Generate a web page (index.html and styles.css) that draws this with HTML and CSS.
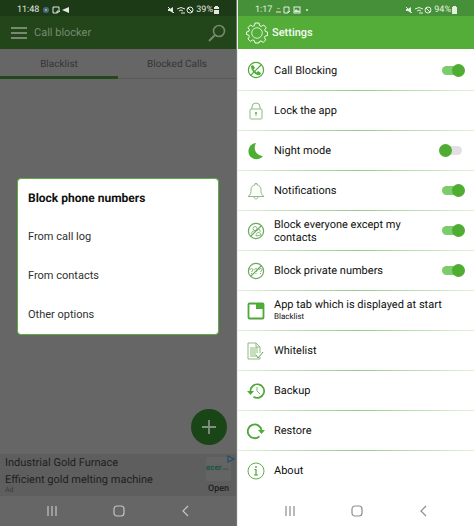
FILE: index.html
```
<!DOCTYPE html>
<html lang="en">
	<head>
		<meta charset="UTF-8" />
		<meta name="viewport" content="width=device-width, initial-scale=1.0" />
		<title>Call blocker</title>
		<link rel="stylesheet" href="styles.css">
	</head>
	<body>
		<section class="phone phone-dimmed">
			<div class="status">
				<span class="clock">11:48</span>
				<svg class="status-left" viewBox="0 0 28 8">
					<circle cx="4" cy="4" r="3" fill="#456b8c" /><circle cx="4" cy="4" r="1" fill="#c6b53e" />
					<path d="M15 7H11V1h6v3M15 7V5h3z" fill="none" stroke="currentColor" />
					<path d="M20 4l7-3v6z" fill="currentColor" />
				</svg>
				<svg class="status-right" viewBox="0 0 28 8">
					<path d="M1 3h2l3-2v6L3 5H1z" fill="currentColor" /><path d="M1 1l6 6" stroke="currentColor" />
					<path d="M10 3q4-3 8 0M12 5q2-2 4 0M14 7h4" fill="none" stroke="currentColor" />
					<circle cx="23" cy="4" r="3" fill="none" stroke="currentColor" /><path d="M21 2l4 4" stroke="currentColor" />
				</svg>
				<span>39%</span>
				<svg class="battery" viewBox="0 0 5 8"><path d="M1 0h3v1h1v2H0V1h1zM0 4h5v4H0z" fill="currentColor" /></svg>
			</div>
			<header class="bar">
				<button class="icon-button" aria-label="Menu">
					<svg class="menu-icon" viewBox="0 0 18 14"><path d="M1 2h16M1 7h16M1 12h16" stroke="currentColor" stroke-width="2" /></svg>
				</button>
				<h1>Call blocker</h1>
				<button class="icon-button search" aria-label="Search">
					<svg class="search-icon" viewBox="0 0 18 18"><circle cx="11" cy="7" r="5.5" fill="none" stroke="currentColor" stroke-width="1.6" /><path d="M7 11l-6 6" stroke="currentColor" stroke-width="2" /></svg>
				</button>
			</header>
			<nav class="tabs">
				<a class="tab tab-active" href="#blacklist">Blacklist</a>
				<a class="tab" href="#blocked">Blocked Calls</a>
			</nav>
			<main class="blacklist">
				<button class="add" aria-label="Add number">
					<svg viewBox="0 0 16 16"><path d="M8 1v14M1 8h14" stroke="currentColor" stroke-width="1.8" /></svg>
				</button>
			</main>
			<aside class="ad">
				<div class="ad-text">
					<p>Industrial Gold Furnace</p>
					<p>Efficient gold melting machine</p>
					<small>Ad</small>
				</div>
				<div class="ad-side">
					<span class="ad-logo">ecer<i>.com</i></span>
					<svg class="ad-mark" viewBox="0 0 8 8"><path d="M1 1l6 3-6 3z" fill="none" stroke="#264f68" stroke-width="1.3" /></svg>
					<a href="#open">Open</a>
				</div>
			</aside>
			<nav class="nav">
				<button aria-label="Recent apps"><svg viewBox="0 0 12 12"><path d="M2 1v10M6 1v10M10 1v10" /></svg></button>
				<button aria-label="Home"><svg viewBox="0 0 12 12"><rect x="1" y="1" width="10" height="10" rx="3" /></svg></button>
				<button aria-label="Back"><svg viewBox="0 0 12 12"><path d="M9 1L4 6l5 5" /></svg></button>
			</nav>
			<div class="dialog" role="dialog" aria-labelledby="dialogTitle">
				<h2 id="dialogTitle">Block phone numbers</h2>
				<button>From call log</button>
				<button>From contacts</button>
				<button>Other options</button>
			</div>
		</section>

		<section class="phone">
			<div class="status">
				<span class="clock">1:17</span>
				<svg class="status-left" viewBox="0 0 28 8">
					<path d="M2 2h3v1H2zM1 5h5v2H1z" fill="#a5b878" />
					<path d="M13 7H9V1h5v3M13 7V5h2z" fill="none" stroke="currentColor" />
					<rect x="19" y="1" width="6" height="6" fill="none" stroke="currentColor" /><path d="M19 6l2-3 2 2 1-1 1 2z" fill="currentColor" />
				</svg>
				<span class="dot"></span>
				<svg class="status-right" viewBox="0 0 28 8">
					<path d="M1 3h2l3-2v6L3 5H1z" fill="currentColor" /><path d="M1 1l6 6" stroke="currentColor" />
					<path d="M10 3q4-3 8 0M12 5q2-2 4 0M14 7h4" fill="none" stroke="currentColor" />
					<circle cx="23" cy="4" r="3" fill="none" stroke="currentColor" /><path d="M21 2l4 4" stroke="currentColor" />
				</svg>
				<span>94%</span>
				<svg class="battery" viewBox="0 0 5 8"><path d="M1 0h3v1h1v7H0V1h1z" fill="currentColor" /></svg>
			</div>
			<header class="bar">
				<svg class="gear-icon" viewBox="0 0 22 22" fill="none" stroke="currentColor" stroke-linejoin="round">
					<path d="M9 1h4l.6 2.7 1.7.7L17.700 3l2.500 2.700-1.500 2.200.7 1.600 2.100.5v3.500l-2.400.6-.7 1.600 1.400 2.200-2.600 2.500-2.200-1.500-1.700.7L13 21H9l-.6-2.400-1.700-.7-2.300 1.500L2 16.900l1.400-2.200-.7-1.600-2.200-.6V10l2.200-.5.7-1.600L2 5.700 4.500 3l2.200 1.400 1.700-.7z" />
					<circle cx="11" cy="11" r="5.300" stroke-width=".8" />
				</svg>
				<h1>Settings</h1>
			</header>
			<main class="settings">
				<div class="row">
					<svg class="row-icon" viewBox="0 0 18 18">
						<circle cx="9" cy="9" r="7.600" /><path d="M3.500 14.500l11-11" />
						<path class="solid" d="M4 5l2-1 2 3-1.500 1.500 3 3L11 10l3 2-1 2c-4 1-9-4-9-9z" />
					</svg>
					<label for="blocking">Call Blocking</label>
					<input class="switch" type="checkbox" id="blocking" checked />
				</div>
				<div class="row">
					<svg class="row-icon soft" viewBox="0 0 18 18">
						<rect x="3" y="7" width="12" height="10" rx="1" /><path d="M5 7V5a4 4 0 0 1 8 0v2M9 11v3" /><circle class="solid" cx="9" cy="11" r="1" />
					</svg>
					<a href="#lock">Lock the app</a>
				</div>
				<div class="row">
					<svg class="row-icon" viewBox="0 0 18 18"><path class="solid" d="M9 1C6 6 8 13 16 14 11 20 1 17 1.500 9 1.700 4 5 1.500 9 1z" /></svg>
					<label for="night">Night mode</label>
					<input class="switch" type="checkbox" id="night" />
				</div>
				<div class="row">
					<svg class="row-icon soft" viewBox="0 0 18 18"><path d="M1 14.500c3-2 3-4 3-7C4 5 6 3 8 3V1.500h2V3c2 0 4 2 4 4.500 0 3 0 5 3 7zM7 15c0 2.500 4 2.500 4 0" /></svg>
					<label for="notify">Notifications</label>
					<input class="switch" type="checkbox" id="notify" checked />
				</div>
				<div class="row">
					<svg class="row-icon muted" viewBox="0 0 18 18">
						<circle cx="9" cy="9" r="7.600" /><path d="M3.500 14.500l11-11" />
						<g stroke-width=".8"><circle cx="8" cy="6.500" r="2" /><path d="M4 12c1-3 3-3 5-3M9 14c0-5 5-4 5-1zM10 9c0-3 4-2 3 1" /></g>
					</svg>
					<label for="everyone">Block everyone except my contacts</label>
					<input class="switch" type="checkbox" id="everyone" checked />
				</div>
				<div class="row">
					<svg class="row-icon muted" viewBox="0 0 18 18">
						<circle cx="9" cy="9" r="7.600" /><path d="M3.500 14.500l11-11" />
						<path stroke-width=".9" d="M3 8c0-2 3-2 3 0L4.500 10M7.500 8c0-2 3-2 3 0L9 10M12 8c0-2 3-2 3 0l-1.500 2M4.500 11v1M9 11v1M13.500 11v1" />
					</svg>
					<label for="private">Block private numbers</label>
					<input class="switch" type="checkbox" id="private" checked />
				</div>
				<div class="row">
					<svg class="row-icon" viewBox="0 0 18 18"><rect x="1.500" y="1.500" width="15" height="15" rx="1" stroke-width="1.800" /><path class="solid" d="M9 2h7v5H9z" /></svg>
					<a href="#start">App tab which is displayed at start <small>Blacklist</small></a>
				</div>
				<div class="row">
					<svg class="row-icon soft" viewBox="0 0 18 18">
						<path d="M13 11V5L9 1H1v16h12v-2M9 1v4h4" /><path d="M3 6h8M3 8h8M3 10h8M3 12h6M3 14h6" /><path class="check" d="M9 13l2 3 5-6" />
					</svg>
					<a href="#whitelist">Whitelist</a>
				</div>
				<div class="row">
					<svg class="row-icon" viewBox="0 0 18 18"><path stroke-width="1.700" d="M3.500 9a6.800 6.800 0 1 1 3 5.700" /><path class="solid" d="M0 9h7l-3.500 4z" /><path stroke-width=".8" d="M10 5v4l3 3" /></svg>
					<a href="#backup">Backup</a>
				</div>
				<div class="row">
					<svg class="row-icon" viewBox="0 0 18 18"><path stroke-width="1.800" d="M12.500 14.300a6.900 6.900 0 1 1 2-6" /><path class="solid" d="M11 8h7l-3.500 4z" /></svg>
					<a href="#restore">Restore</a>
				</div>
				<div class="row">
					<svg class="row-icon" viewBox="0 0 18 18"><circle cx="9" cy="9" r="8" stroke-width=".9" /><path d="M7.500 7.500H9V13M7 13h4" /><circle class="solid" cx="9" cy="5" r=".9" /></svg>
					<a href="#about">About</a>
				</div>
			</main>
			<nav class="nav">
				<button aria-label="Recent apps"><svg viewBox="0 0 12 12"><path d="M2 1v10M6 1v10M10 1v10" /></svg></button>
				<button aria-label="Home"><svg viewBox="0 0 12 12"><rect x="1" y="1" width="10" height="10" rx="3" /></svg></button>
				<button aria-label="Back"><svg viewBox="0 0 12 12"><path d="M9 1L4 6l5 5" /></svg></button>
			</nav>
		</section>
	</body>
</html>
```
FILE: styles.css
```
* {
	box-sizing: border-box;
}
body {
	display: grid;
	grid-template-columns: 1fr 1fr;
	min-height: 100vh;
	margin: 0;
	font-family: Roboto, sans-serif;
	font-size: 11px;
	color: #111;
	text-rendering: geometricPrecision;
}
h1,
h2,
p {
	margin: 0;
}
a {
	color: inherit;
	text-decoration: none;
}
button {
	padding: 0;
	border: none;
	background: none;
	color: inherit;
	font: inherit;
	cursor: pointer;
}
svg {
	display: block;
}
.phone {
	position: relative;
	display: flex;
	flex-direction: column;
	background-color: #fefffe;
	border-left: 1px solid #e8eee8;
}
.phone-dimmed {
	background-color: #666;
	border-left: none;
	border-right: 1px solid #777;
}

/* status bar */
.status {
	display: flex;
	align-items: center;
	height: 16px;
	padding: 4px 17px 0 17px;
	background-color: #46903a;
	color: #e2f0df;
	font-size: 9px;
}
.phone-dimmed .status {
	background-color: #1c3a15;
	color: #e3e7e2;
}
.status-left {
	width: 28px;
	height: 8px;
	margin-left: 3px;
}
.dot {
	width: 2px;
	height: 2px;
	margin-left: 3px;
	border-radius: 50%;
	background-color: currentColor;
}
.status-right {
	width: 28px;
	height: 8px;
	margin: 0 1px 0 auto;
}
.battery {
	width: 5px;
	height: 8px;
	margin-left: 1px;
}

/* title bar */
.bar {
	display: flex;
	align-items: center;
	height: 33px;
	padding: 0 10px 0 8px;
	background-color: #55ad39;
	color: #f4fbf1;
}
.bar h1 {
	font-size: 11px;
	font-weight: 500;
}
.phone-dimmed .bar {
	background-color: #22451a;
	color: #768a70;
}
.phone-dimmed .bar h1 {
	font-weight: 400;
}
.icon-button {
	padding: 0 6px 0 2px;
}
.search {
	margin-left: auto;
	padding: 0;
}
.menu-icon {
	width: 18px;
	height: 14px;
}
.search-icon {
	width: 18px;
	height: 18px;
}
.gear-icon {
	width: 22px;
	height: 22px;
	margin-right: 4px;
}

.tabs {
	display: flex;
	height: 30px;
}
.tab {
	display: flex;
	flex: 1;
	align-items: center;
	justify-content: center;
	padding-top: 1px;
	border-bottom: 1px solid #595959;
	color: #353535;
	font-size: 10px;
}
.tab-active {
	padding-top: 3px;
	border-bottom: 3px solid #24471c;
}
.blacklist {
	display: flex;
	flex: 1;
	align-items: flex-end;
	justify-content: flex-end;
	padding: 9px;
}
.add {
	display: grid;
	place-items: center;
	width: 36px;
	height: 36px;
	border-radius: 50%;
	background-color: #1a4517;
	color: #82907f;
}
.add svg {
	width: 16px;
	height: 16px;
}

.ad {
	display: flex;
	height: 42px;
	padding: 0 1px 0 5px;
	background-color: #5e5e5e;
	color: #202020;
}
.ad-text {
	flex: 1;
}
.ad-text p {
	font-size: 11px;
	line-height: 17px;
	white-space: nowrap;
}
.ad-text small {
	display: block;
	color: #3c3c3c;
	font-size: 7px;
	line-height: 4px;
}
.ad-side {
	position: relative;
	display: flex;
	flex-direction: column;
	justify-content: space-between;
	width: 29px;
	padding: 3px 4px 2px 0;
	font-size: 9px;
	font-weight: 500;
}
.ad-side a {
	text-align: center;
}
.ad-logo {
	height: 24px;
	background-color: #646464;
	color: #1c5541;
	font-size: 8px;
	font-weight: 700;
	line-height: 22px;
}
.ad-logo i {
	font-size: 3px;
}
.ad-mark {
	position: absolute;
	top: 1px;
	right: 0;
	width: 8px;
	height: 8px;
}

/* system buttons */
.nav {
	display: flex;
	align-items: center;
	justify-content: space-between;
	height: 30px;
	padding: 0 45px 0 46px;
	color: #8d8d8d;
}
.phone-dimmed .nav {
	color: #c4c4c4;
}
.nav svg {
	width: 12px;
	height: 12px;
	fill: none;
	stroke: currentColor;
	stroke-width: 1.2;
}

.dialog {
	position: absolute;
	top: 178px;
	left: 17px;
	right: 17px;
	display: flex;
	flex-direction: column;
	align-items: flex-start;
	padding: 0 10px;
	border: 1px solid #5cae40;
	border-radius: 4px;
	background-color: #fff;
}
.dialog h2 {
	font-size: 12px;
	font-weight: 700;
	line-height: 38px;
}
.dialog button {
	height: 39px;
	color: #303030;
}

/* settings list */
.settings {
	flex: 1;
	padding-top: 1px;
}
.row {
	display: flex;
	align-items: center;
	gap: 9px;
	height: 40px;
	padding: 0 9px;
}
.row + .row {
	border-top: 1px solid;
	border-image: linear-gradient(to right, #dff3da, #96cb8d 50%, #dff3da) 1;
}
.row label,
.row a {
	flex: 1;
	line-height: 13px;
}
.row small {
	display: block;
	font-size: 8px;
	line-height: 12px;
}
.row-icon {
	width: 18px;
	height: 18px;
	flex: none;
	fill: none;
	stroke: #50a63b;
	stroke-width: 1.2;
}
.solid {
	fill: #4cae32;
	stroke: none;
}
.soft {
	stroke: #8abd7f;
	stroke-width: 1;
}
.muted {
	stroke: #6aa85c;
}
.check {
	stroke: #55a647;
}
.switch {
	appearance: none;
	display: flex;
	align-items: center;
	width: 20px;
	height: 9px;
	margin: 0 3px;
	border-radius: 5px;
	background-color: #e2e0e4;
	cursor: pointer;
}
.switch::before {
	content: "";
	flex: none;
	width: 13px;
	height: 13px;
	margin: 0 -3px;
	border-radius: 50%;
	background-color: #50ad34;
}
.switch:checked {
	justify-content: flex-end;
	background-color: #7ccb6c;
}
```
